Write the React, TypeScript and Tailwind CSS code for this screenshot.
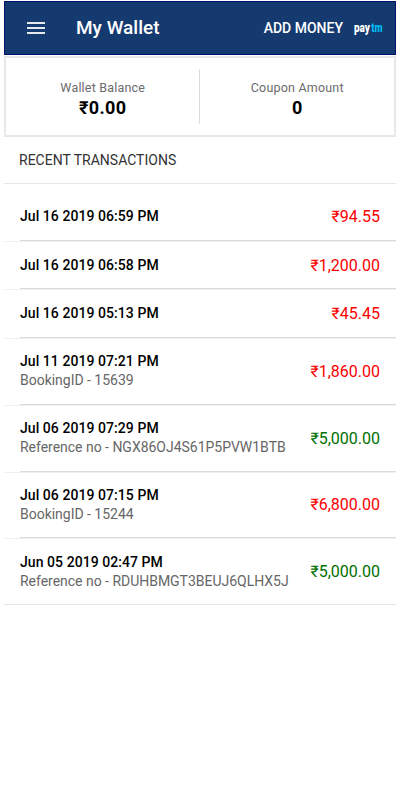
type Transaction = {
  date: string;
  note?: string;
  amount: string;
  credit?: boolean;
};

const transactions: Transaction[] = [
  { date: 'Jul 16 2019 06:59 PM', amount: '₹94.55' },
  { date: 'Jul 16 2019 06:58 PM', amount: '₹1,200.00' },
  { date: 'Jul 16 2019 05:13 PM', amount: '₹45.45' },
  { date: 'Jul 11 2019 07:21 PM', note: 'BookingID - 15639', amount: '₹1,860.00' },
  { date: 'Jul 06 2019 07:29 PM', note: 'Reference no - NGX86OJ4S61P5PVW1BTB', amount: '₹5,000.00', credit: true },
  { date: 'Jul 06 2019 07:15 PM', note: 'BookingID - 15244', amount: '₹6,800.00' },
  { date: 'Jun 05 2019 02:47 PM', note: 'Reference no - RDUHBMGT3BEUJ6QLHX5J', amount: '₹5,000.00', credit: true },
];

function PaytmLogo() {
  return (
    <svg viewBox="0 0 29 18" className="ml-[11px] h-[18px] w-[29px] overflow-visible" aria-label="paytm">
      <g className="text-[12px] font-black">
        <text x="0" y="12.5" textLength="16" lengthAdjust="spacingAndGlyphs" fill="#fff">
          pay
        </text>
        <text x="17.2" y="12.5" textLength="11.3" lengthAdjust="spacingAndGlyphs" fill="#00baf2">
          tm
        </text>
      </g>
    </svg>
  );
}

function Header() {
  return (
    <header className="flex h-[54px] items-center border border-[#03106e] bg-[#153a70] pl-[22px] pr-[12px] text-white">
      <button aria-label="Menu" className="flex h-[12px] w-[18px] flex-col justify-between">
        <span className="h-[2px] w-full bg-[#e4e8ee]" />
        <span className="h-[2px] w-full bg-[#e4e8ee]" />
        <span className="h-[2px] w-full bg-[#e4e8ee]" />
      </button>
      <h1 className="ml-[31px] text-[19px] font-medium leading-6">My Wallet</h1>
      <button className="ml-auto text-[14px] font-medium leading-5">ADD MONEY</button>
      <PaytmLogo />
    </header>
  );
}

function Summary({ label, value }: { label: string; value: string }) {
  return (
    <div className="flex flex-1 flex-col items-center pt-[10px]">
      <span className="text-[12.5px] leading-[18px] tracking-[0.2px] text-[#6b6b6b]">{label}</span>
      <span className="text-[18px] font-bold leading-[22px] tracking-[0.4px] text-black">{value}</span>
    </div>
  );
}

function Row({ item }: { item: Transaction }) {
  return (
    <li className={`group flex flex-col border-b border-[#f0f0f0] last:h-[65px] last:border-b-0 ${item.note ? 'h-[66.8px]' : 'h-[48.6px]'}`}>
      <div className="ml-4 flex flex-1 items-center justify-between border-b border-[#dadada] pr-4 group-last:border-b-0">
        <div>
          <p className="text-[14px] font-medium leading-[19px] tracking-[0.06px] text-black">{item.date}</p>
          {item.note && <p className="text-[14px] leading-[19px] tracking-[-0.02px] text-[#666]">{item.note}</p>}
        </div>
        <span className={`pt-px text-[16px] leading-5 ${item.credit ? 'text-[#007000]' : 'text-[#fb0000]'}`}>
          {item.amount}
        </span>
      </div>
    </li>
  );
}

export default function App() {
  return (
    <div className="min-h-screen bg-white pl-1 pr-[6px] pt-px font-['Roboto','Noto_Sans',sans-serif]">
      <Header />
      <section className="mt-px flex h-[81px] border-2 border-[#e8e8e8] py-[11px]">
        <Summary label="Wallet Balance" value="₹0.00" />
        <div className="-ml-px mr-px w-px bg-[#dcdcdc]" />
        <Summary label="Coupon Amount" value="0" />
      </section>
      <h2 className="flex h-[47px] items-center border-b border-[#e6e6e6] pl-[15px] text-[14px] leading-5 text-[#333]">
        RECENT TRANSACTIONS
      </h2>
      <ul className="border-b border-[#e6e6e6] pt-[9.2px]">
        {transactions.map((item) => (
          <Row key={item.date} item={item} />
        ))}
      </ul>
    </div>
  );
}
